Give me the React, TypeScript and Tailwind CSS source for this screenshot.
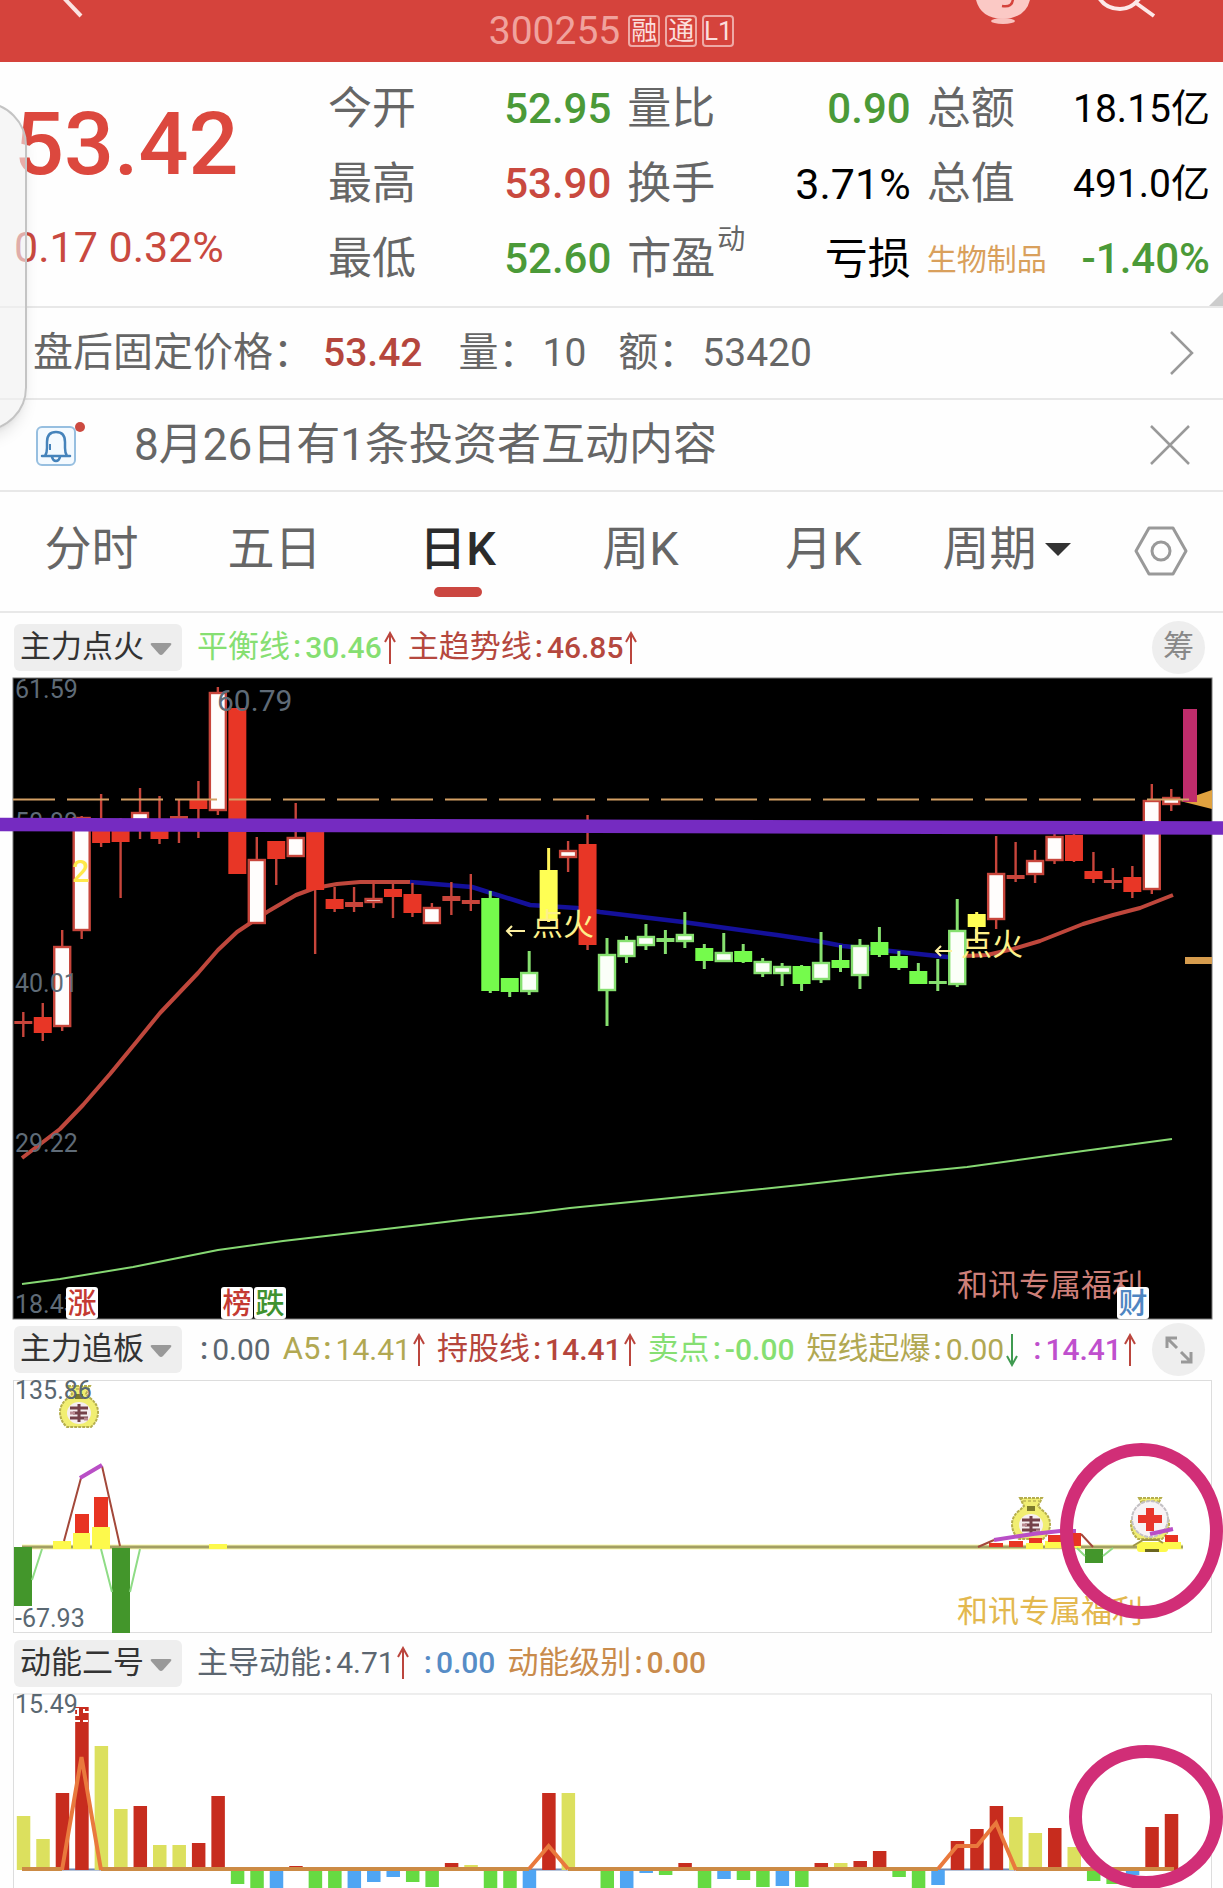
import { useState, type ReactNode } from "react";

const STEP = 19.457;
const FIRST = 23.3;
const cx = (i: number) => FIRST + i * STEP;

type Kind = "r" | "h" | "g" | "w" | "y";
type Candle = [high: number, top: number, bottom: number, low: number, kind: Kind];

const candles: Candle[] = [
  [1012, 1021, 1024, 1037, "r"], [1003, 1017, 1033, 1041, "r"], [930, 946, 1027, 1031, "h"],
  [816, 817, 931, 939, "h"], [794, 822, 843, 847, "r"], [818, 822, 842, 898, "r"],
  [788, 812, 826, 839, "h"], [796, 825, 839, 844, "r"], [800, 816, 820, 843, "r"],
  [781, 800, 809, 838, "r"], [687, 692, 811, 815, "h"], [708, 708, 874, 874, "r"],
  [837, 859, 924, 924, "h"], [841, 841, 859, 885, "r"], [803, 837, 857, 857, "h"],
  [830, 830, 890, 954, "r"], [887, 899, 909, 912, "r"], [887, 902, 907, 912, "r"],
  [880, 898, 903, 908, "h"], [883, 889, 897, 918, "r"], [883, 894, 913, 917, "r"],
  [903, 907, 924, 924, "h"], [882, 896, 901, 915, "r"], [874, 900, 904, 911, "r"],
  [891, 898, 991, 993, "g"], [978, 978, 992, 997, "g"], [951, 972, 992, 995, "w"],
  [848, 870, 920, 922, "y"], [841, 850, 858, 872, "h"], [815, 844, 945, 950, "r"],
  [938, 954, 991, 1026, "w"], [936, 940, 957, 963, "w"], [924, 936, 946, 950, "w"],
  [930, 938, 942, 954, "g"], [912, 934, 942, 948, "w"], [944, 948, 961, 969, "g"],
  [933, 952, 962, 962, "w"], [944, 951, 962, 963, "g"], [958, 961, 974, 977, "w"],
  [963, 966, 974, 986, "w"], [965, 966, 984, 991, "g"], [932, 962, 980, 983, "w"],
  [945, 960, 968, 972, "g"], [939, 945, 976, 989, "w"], [927, 942, 955, 957, "g"],
  [951, 956, 968, 970, "g"], [963, 971, 984, 984, "g"], [959, 981, 984, 991, "g"],
  [899, 930, 985, 987, "w"], [912, 914, 927, 943, "y"], [836, 873, 920, 929, "h"],
  [842, 875, 879, 882, "r"], [850, 860, 875, 883, "h"], [833, 836, 861, 864, "h"],
  [833, 835, 861, 862, "r"], [852, 871, 879, 883, "r"], [868, 880, 883, 889, "r"],
  [866, 877, 892, 898, "r"], [784, 800, 890, 894, "h"], [789, 797, 805, 811, "h"],
];

const edge: Record<Kind, string> = { r: "#c8453b", h: "#c8453b", g: "#86e06f", w: "#86e06f", y: "#fff35a" };
const fill: Record<Kind, string> = { r: "#e83626", h: "#fffdfc", g: "#75fb4c", w: "#fbfff8", y: "#ffff54" };

const energy: [number, string][] = [
  [1816, "Y"], [1839, "Y"], [1793, "R"], [1707, "R"], [1746, "Y"], [1809, "Y"], [1806, "R"], [1845, "Y"],
  [1845, "Y"], [1843, "R"], [1796, "R"], [1884, "G"], [1900, "G"], [1900, "B"], [1866, "R"], [1900, "G"],
  [1900, "G"], [1900, "B"], [1882, "B"], [1877, "B"], [1882, "G"], [1887, "G"], [1863, "R"], [1865, "Y"],
  [1900, "G"], [1900, "G"], [1900, "B"], [1793, "R"], [1793, "Y"], [1869, "Y"], [1900, "G"], [1900, "B"],
  [1873, "B"], [1875, "G"], [1863, "R"], [1900, "G"], [1879, "B"], [1880, "G"], [1887, "G"], [1886, "B"],
  [1887, "G"], [1863, "R"], [1863, "Y"], [1861, "R"], [1851, "R"], [1877, "G"], [1900, "G"], [1885, "B"],
  [1841, "R"], [1829, "R"], [1806, "R"], [1817, "Y"], [1833, "Y"], [1828, "R"], [1847, "Y"], [1881, "G"],
  [1884, "G"], [1875, "B"], [1827, "R"], [1814, "R"],
];
const energyFill: Record<string, string> = { Y: "#dce05e", R: "#c72c1e", G: "#66da42", B: "#4fa5f3" };

const periods = ["分时", "五日", "日K", "周K", "月K"];

function Stat({ label, sup, value, tone }: { label: ReactNode; sup?: string; value: string; tone: string }) {
  return (
    <div className="flex h-[75px] items-center justify-between whitespace-nowrap">
      <span className="relative text-[44px] text-[#666]">
        {label}
        {sup && <sup className="absolute -top-2 left-full ml-0.5 text-[28px] leading-8">{sup}</sup>}
      </span>
      <span className={tone}>{value}</span>
    </div>
  );
}

function Arrow({ down = false }: { down?: boolean }) {
  return (
    <svg viewBox="0 0 12 34" className="ml-0.5 h-[34px] w-3" fill="none" stroke={down ? "#3f9a50" : "#bb453d"} strokeWidth="2" aria-hidden="true">
      {down ? <path d="M6 1V32M1 23L6 32L11 23" /> : <path d="M6 33V2M1 11L6 2L11 11" />}
    </svg>
  );
}

function Reading({ label = "", value, tone, strong = false, arrow }: { label?: string; value: string; tone: string; strong?: boolean; arrow?: "up" | "down" }) {
  return (
    <div className={`flex items-center whitespace-nowrap text-[31px] ${tone}`}>
      <span>{label}</span>
      <span className="mr-1 ml-[3px] font-medium">:</span>
      <span className={strong ? "text-[30px] font-medium" : "text-[30px]"}>{value}</span>
      {arrow && <Arrow down={arrow === "down"} />}
    </div>
  );
}

function Picker({ name, label }: { name: string; label: string }) {
  return (
    <div className="relative mr-[3px] w-[168px] shrink-0">
      <select aria-label={label} className="block h-[47px] w-full appearance-none rounded-md bg-[#eee] pl-1.5 text-[31px] text-[#333]" defaultValue={name}>
        <option>{name}</option>
      </select>
      <svg viewBox="0 0 22 13" className="pointer-events-none absolute top-[19px] right-[10px] h-[13px] w-[22px]" aria-hidden="true">
        <path d="M2 0H20Q22 0 21 2L13 11Q11 13 9 11L1 2Q0 0 2 0Z" fill="#999" />
      </svg>
    </div>
  );
}

function Bag({ x, y, cross = false }: { x: number; y: number; cross?: boolean }) {
  return (
    <g transform={`translate(${x} ${y})`}>
      <path d="M-11 0L11 0L7 8L11 12Q19 18 19 26Q19 35 12 41H-12Q-19 35 -19 26Q-19 18 -11 12L-7 8Z" fill="#f1ee72" stroke="#b5ae4d" strokeWidth="2" strokeDasharray="3 1" />
      <path d="M-8 3H8" stroke="#cbc35c" strokeWidth="2" strokeDasharray="3 2" />
      {!cross && <rect x="-4" y="8" width="8" height="5" fill="#7d7a2a" />}
      {cross ? (
        <>
          <circle cx="0" cy="21" r="18" fill="#f7f3f5" stroke="#c3c0c4" strokeWidth="2" strokeDasharray="4 1" />
          <path d="M-4 10H4V17H12V25H4V33H-4V25H-12V17H-4Z" fill="#e8362b" />
        </>
      ) : (
        <>
          <ellipse cx="0" cy="27" rx="12" ry="11" fill="#f5eef0" />
          <path d="M-9 22H9M-6 27H8M-9 32H9M0 18V36" stroke="#75424a" strokeWidth="3" />
          <path d="M-9 27H-4M5 33H9" stroke="#b98a92" strokeWidth="3" />
        </>
      )}
    </g>
  );
}

function EventTag({ x, color, char }: { x: number; color: string; char: string }) {
  return (
    <g>
      <rect x={x} y="1287" width="32" height="32" rx="3" fill="#fff" />
      <text x={x + 16} y="1314" fontSize="29" textAnchor="middle" fill={color} fontWeight="500">{char}</text>
    </g>
  );
}

function TrendChart() {
  return (
    <svg viewBox="13 678 1199 641" className="block h-auto w-full overflow-visible" role="img" aria-label="日K 主力点火">
      <rect x="13" y="678" width="1199" height="641" fill="#000" stroke="#777" strokeWidth="1" />
      <g fill="none" strokeLinejoin="round">
        <path d="M22 1284L60 1279L133 1267L218 1250L283 1241L420 1225L470 1219L530 1213L570 1208L722 1193L800 1185L897 1174L967 1167L1083 1151L1172 1139" stroke="#86d873" strokeWidth="2" />
        <path d="M22 1158L60 1129L83 1105L110 1074L138 1040L160 1013L198 973L218 950L237 932L252 922L267 912L296 895L315 888L337 884L360 882L410 882" stroke="#bf473c" strokeWidth="4" />
        <path d="M410 882L472 887L488 892L530 905L577 908L600 912L683 922L777 935L817 941L843 946L900 952L947 957L963 956" stroke="#14109a" strokeWidth="4.5" />
        <path d="M963 956L987 955L1013 949L1040 941L1083 924L1113 915L1140 908L1173 895" stroke="#bf473c" strokeWidth="4" />
      </g>
      {candles.map(([high, top, bottom, low, kind], i) => {
        const hollow = kind === "h" || kind === "w";
        return (
          <g key={i}>
            <path d={`M${cx(i)} ${high}V${low}`} stroke={edge[kind]} strokeWidth={kind === "g" || kind === "w" || kind === "y" ? 3 : 2.4} />
            {hollow ? (
              <rect x={cx(i) - 8} y={top + 1} width="16" height={Math.max(bottom - top - 2, 3)} fill={fill[kind]} stroke={edge[kind]} strokeWidth="2.4" />
            ) : (
              <rect x={cx(i) - 9} y={top} width="18" height={bottom - top} fill={bottom - top < 6 ? edge[kind] : fill[kind]} />
            )}
          </g>
        );
      })}
      <path d="M1180 801L1212 790V809Z" fill="#e0a23f" />
      <rect x="1183" y="709" width="14" height="93" fill="#bf2c6b" />
      <rect x="1185" y="957" width="27" height="7" fill="#d69c4e" />
      <path d="M13 799.5H1190" stroke="#d3a065" strokeWidth="2" strokeDasharray="42 12" />
      <g fontSize="25" fill="#5f6b77">
        <text x="15" y="698">61.59</text>
        <text x="15" y="831">50.80</text>
        <text x="15" y="992">40.01</text>
        <text x="15" y="1152">29.22</text>
        <text x="15" y="1313">18.43</text>
        <text x="217" y="711" fontSize="30">60.79</text>
      </g>
      <text x="72" y="882" fontSize="31" fontWeight="500" fill="#ffe94a">2</text>
      <g fill="#fdf08a" fontSize="31">
        <text x="532" y="935">点火</text>
        <text x="961" y="955">点火</text>
      </g>
      <path d="M525 931H507M512 926L507 931L512 936M952 951H936M941 946L936 951L941 956" fill="none" stroke="#fdf0a0" strokeWidth="2" />
      <text x="957" y="1296" fontSize="31" fill="#cd7f79">和讯专属福利</text>
      <EventTag x={66} color="#c43a32" char="涨" />
      <EventTag x={221} color="#c43a32" char="榜" />
      <EventTag x={254} color="#3f9230" char="跌" />
      <EventTag x={1117} color="#4f86c2" char="财" />
      <path d="M0 824.5L1223 828" stroke="#752bc1" strokeWidth="13.5" />
    </svg>
  );
}

function ChaseChart() {
  return (
    <svg viewBox="13 1380 1199 253" className="block h-auto w-full overflow-visible" role="img" aria-label="主力追板">
      <rect x="13.5" y="1380.5" width="1198" height="252" fill="#fff" stroke="#ddd" />
      <Bag x={79} y={1386} />
      <Bag x={1031} y={1498} />
      <Bag x={1150} y={1498} cross />
      <path d="M22 1547H1183" stroke="#fbfab0" strokeWidth="5" />
      <path d="M22 1547H1183" stroke="#a39f63" strokeWidth="3" />
      <g fill="#43962b">
        <rect x="14" y="1547" width="18" height="59" />
        <rect x="112" y="1548" width="18" height="85" />
        <rect x="1085" y="1549" width="18" height="14" />
      </g>
      <g fill="#fdf94c">
        <rect x="53" y="1541" width="18" height="8" />
        <rect x="73" y="1533" width="17" height="16" />
        <rect x="92" y="1527" width="18" height="22" />
        <rect x="209" y="1544" width="18" height="5" />
        <rect x="1026" y="1543" width="17" height="6" />
        <rect x="1045" y="1541" width="36" height="7" />
        <rect x="1137" y="1542" width="31" height="10" rx="3" />
        <rect x="1160" y="1542" width="21" height="7" />
      </g>
      <g fill="#e83422">
        <rect x="75" y="1514" width="14" height="19" />
        <rect x="94" y="1497" width="14" height="30" />
        <rect x="989" y="1543" width="14" height="4" />
        <rect x="1009" y="1541" width="14" height="6" />
        <rect x="1029" y="1538" width="13" height="5" />
        <rect x="1048" y="1535" width="14" height="7" />
        <rect x="1067" y="1533" width="14" height="13" />
        <rect x="1165" y="1535" width="13" height="7" />
      </g>
      <g fill="none" strokeWidth="2">
        <path d="M32 1580L42 1549M101 1549L112 1592M130 1592L140 1549M1077 1548L1085 1556M1103 1556L1113 1548" stroke="#8fdc86" />
        <path d="M64 1541L81 1478M102 1466L120 1546M978 1547L994 1540M1081 1534L1093 1547" stroke="#a3483a" />
        <path d="M1133 1546L1143 1540H1158L1163 1543" stroke="#a09545" />
        <path d="M80 1478L102 1465M994 1540L1033 1534L1060 1531H1076M1150 1534L1173 1529" stroke="#b94fc6" strokeWidth="4" />
      </g>
      <rect x="1145" y="1549" width="14" height="3" fill="#6b651f" />
      <text x="15" y="1399" fontSize="25" fill="#5a6872">135.86</text>
      <text x="15" y="1627" fontSize="25" fill="#5a6872">-67.93</text>
      <text x="957" y="1622" fontSize="31" fill="#e3b84e">和讯专属福利</text>
      <ellipse cx="1141.5" cy="1531" rx="75" ry="81.5" fill="none" stroke="#d12e77" strokeWidth="13" />
    </svg>
  );
}

function EnergyChart() {
  return (
    <svg viewBox="13 1693 1199 195" className="block h-auto w-full overflow-visible" role="img" aria-label="动能二号">
      <path d="M13.5 1900V1694H1211.5V1900" fill="#fff" stroke="#ddd" />
      <path d="M22 1869.5H1173" stroke="#6f88b4" strokeWidth="2" />
      {energy.map(([value, tone], i) => (
        <rect key={i} x={cx(i) - 6.5} y={Math.min(value, 1870)} width="13.5" height={Math.abs(1870 - value)} fill={energyFill[tone]} />
      ))}
      <g fill="none" stroke="#cc8b45" strokeWidth="4">
        <path d="M22 1869H62M101 1869H529M568 1869H938M1016 1869H1174" />
        <path d="M62 1870L81.5 1757L101 1870M529 1869L548.6 1846L568 1869M938 1869L957 1846H977L996 1823L1016 1870" stroke="#e9793d" />
      </g>
      <path d="M75 1709h3v6h-3M75 1721h5M83 1721h5M84 1709v3h5" stroke="#fff" strokeWidth="2" fill="none" />
      <text x="15" y="1713" fontSize="25" fill="#5a6872">15.49</text>
      <ellipse cx="1146" cy="1817" rx="70.5" ry="65.5" fill="none" stroke="#d12e77" strokeWidth="13" />
    </svg>
  );
}

const green = "text-[42px] font-medium text-[#4b9a38]";
const red = "text-[42px] font-medium text-[#c9493f]";

export default function App() {
  const [period, setPeriod] = useState("日K");
  return (
    <main className="relative h-fit max-h-screen overflow-hidden bg-[#fefefe] font-[Roboto,'Noto_Sans_CJK_SC',sans-serif] leading-tight">
      <header className="relative flex h-[62px] items-center justify-center bg-[#d5433c]">
        <button aria-label="返回" className="absolute top-0 left-[58px]">
          <svg viewBox="0 0 30 20" className="h-5 w-[30px]" fill="none" stroke="#fbe3e1" strokeWidth="4"><path d="M4 -4L23 16" /></svg>
        </button>
        <h1 className="text-[39px] text-[#f0a29d]">300255</h1>
        <div className="ml-2 flex gap-[5px] text-[#fbdedc]">
          {["融", "通", "L1"].map((t) => (
            <span key={t} className="flex size-8 items-center justify-center rounded-[4px] border-2 border-[#eea9a5] text-[26px] leading-none">{t}</span>
          ))}
        </div>
        <button aria-label="助手" className="absolute top-0 right-[190px]">
          <svg viewBox="0 0 60 26" className="h-[26px] w-[60px]">
            <path d="M2 -8H58Q57 18 30 19Q3 18 2 -8Z" fill="#fbc9c5" />
            <path d="M29 6Q40 8 40 -2" fill="none" stroke="#d5433c" strokeWidth="2.5" />
            <ellipse cx="30" cy="21" rx="12" ry="3" fill="#f9c2be" />
          </svg>
        </button>
        <button aria-label="搜索" className="absolute top-0 right-[64px]">
          <svg viewBox="0 0 64 20" className="h-5 w-16" fill="none" stroke="#fde9e8" strokeWidth="4">
            <path d="M3 -4Q10 9 25 9Q38 9 46 -4M41 3L59 16" />
          </svg>
        </button>
      </header>

      <section className="relative flex border-b-2 border-[#e8e8e8] pt-2.5 pr-[13px] pb-[9px]">
        <div className="w-[328px] shrink-0 pl-[14px] font-medium text-[#dc483e]">
          <div className="mt-5 text-[88px] leading-[104px]">53.42</div>
          <div className="mt-6 text-[43px] leading-[54px] font-normal whitespace-nowrap text-[#c9493f]">0.17 0.32%</div>
        </div>
        <div className="grid grow grid-cols-3 gap-x-4">
          <Stat label="今开" value="52.95" tone={green} />
          <Stat label="量比" value="0.90" tone={green} />
          <Stat label="总额" value="18.15亿" tone="text-[39px] text-black" />
          <Stat label="最高" value="53.90" tone={red} />
          <Stat label="换手" value="3.71%" tone="text-[43px] text-black" />
          <Stat label="总值" value="491.0亿" tone="text-[39px] text-black" />
          <Stat label="最低" value="52.60" tone={green} />
          <Stat label="市盈" sup="动" value="亏损" tone="text-[43px] text-black" />
          <Stat label={<a href="#sector" className="block text-[30px] text-[#d9a05c]">生物制品</a>} value="-1.40%" tone={green} />
        </div>
        <svg viewBox="0 0 14 14" className="absolute right-0 bottom-0 size-3.5" aria-hidden="true"><path d="M14 0V14H0Z" fill="#ccc" /></svg>
      </section>

      <section className="flex h-[92px] items-center border-b-2 border-[#e8e8e8] pr-7 pl-[33px] text-[40px] whitespace-nowrap text-[#666]">
        <span>盘后固定价格：</span>
        <span className="ml-2.5 text-[39px] font-medium text-[#b5463d]">53.42</span>
        <span className="ml-9">量：</span>
        <span className="ml-1 text-[39px]">10</span>
        <span className="ml-8">额：</span>
        <span className="ml-1 text-[39px]">53420</span>
        <button aria-label="查看盘后交易" className="ml-auto">
          <svg viewBox="0 0 26 46" className="h-[46px] w-[26px]" fill="none" stroke="#999" strokeWidth="2.5"><path d="M2 2L23 23L2 44" /></svg>
        </button>
      </section>

      <section className="flex h-[92px] items-center border-b-2 border-[#e8e8e8] pr-8 pl-9 text-[44px] whitespace-nowrap text-[#666]">
        <svg viewBox="0 0 50 46" className="mr-12 h-[46px] w-[50px] shrink-0" fill="none" aria-hidden="true">
          <rect x="1" y="5" width="38" height="38" rx="5" fill="#f4faff" stroke="#97bfe0" strokeWidth="2" />
          <path d="M6 34H34M9 34Q11 31 11 26V20Q11 10 20 10Q29 10 29 20V26Q29 31 31 34M16 35Q17 39 20 39Q23 39 24 35" stroke="#4583bb" strokeWidth="2.5" strokeLinecap="round" />
          <path d="M14 28V22" stroke="#4583bb" strokeWidth="2" />
          <circle cx="44" cy="5" r="5" fill="#cc4a40" />
        </svg>
        <a href="#notice">8月26日有1条投资者互动内容</a>
        <button aria-label="关闭" className="ml-auto">
          <svg viewBox="0 0 42 42" className="size-[42px]" fill="none" stroke="#999" strokeWidth="2.5"><path d="M2 2L40 40M40 2L2 40" /></svg>
        </button>
      </section>

      <nav className="flex h-[121px] border-b-2 border-[#e8e8e8] text-[47px] text-[#666]">
        {periods.map((p) => (
          <button key={p} onClick={() => setPeriod(p)} className={`relative flex-[183] pb-1 ${p === period ? "font-medium text-[#2b2b2b]" : ""}`}>
            {p}
            {p === period && <span className="absolute bottom-3.5 left-1/2 h-2.5 w-12 -translate-x-1/2 rounded-full bg-[#cb4741]" />}
          </button>
        ))}
        <button aria-haspopup="menu" className="flex flex-[183] items-center justify-center gap-2 pb-1">
          周期
          <svg viewBox="0 0 26 13" className="h-[13px] w-[26px]" aria-hidden="true"><path d="M0 0H26L13 13Z" fill="#333" /></svg>
        </button>
        <button aria-label="设置" className="flex flex-[125] items-center justify-center pb-0.5">
          <svg viewBox="0 0 54 50" className="h-[50px] w-[54px]" fill="none" stroke="#999" strokeWidth="3" strokeLinejoin="round">
            <path d="M15 2H39L52 25L39 48H15L2 25Z" /><circle cx="27" cy="25" r="9" />
          </svg>
        </button>
      </nav>

      <div className="flex h-[65px] items-center gap-3 pt-1 pr-[18px] pl-[14px]">
        <Picker name="主力点火" label="主图指标" />
        <Reading label="平衡线" value="30.46" tone="text-[#86df72]" strong arrow="up" />
        <Reading label="主趋势线" value="46.85" tone="text-[#b5483e]" strong arrow="up" />
        <button className="ml-auto size-[53px] rounded-full bg-[#eee] text-[31px] text-[#888]">筹</button>
      </div>
      <div className="pr-[11px] pl-[13px]"><TrendChart /></div>

      <div className="flex h-[61px] items-center gap-3 pr-[18px] pl-[14px]">
        <Picker name="主力追板" label="副图指标一" />
        <Reading value="0.00" tone="text-[#5c6670]" />
        <Reading label="A5" value="14.41" tone="text-[#b1a852]" arrow="up" />
        <Reading label="持股线" value="14.41" tone="text-[#b5453b]" strong arrow="up" />
        <Reading label="卖点" value="-0.00" tone="text-[#86df72]" strong />
        <Reading label="短线起爆" value="0.00" tone="text-[#b1a852]" arrow="down" />
        <Reading value="14.41" tone="text-[#bf4fcd]" strong arrow="up" />
        <button aria-label="放大" className="ml-auto flex size-[53px] shrink-0 items-center justify-center rounded-full bg-[#eee]">
          <svg viewBox="0 0 28 28" className="size-7" fill="none" stroke="#999" strokeWidth="3"><path d="M2 12V2H12M2 2L12 12M26 16V26H16M26 26L16 16" /></svg>
        </button>
      </div>
      <div className="pr-[11px] pl-[13px]"><ChaseChart /></div>

      <div className="flex h-[60px] items-center gap-3 pr-[18px] pl-[14px]">
        <Picker name="动能二号" label="副图指标二" />
        <Reading label="主导动能" value="4.71" tone="text-[#5c6670]" arrow="up" />
        <Reading value="0.00" tone="text-[#568cc6]" strong />
        <Reading label="动能级别" value="0.00" tone="text-[#c98b4c]" strong />
      </div>
      <div className="pr-[11px] pl-[13px]"><EnergyChart /></div>

      <aside className="absolute top-[102px] -left-[60px] h-[329px] w-[87px] rounded-[60px] border-2 border-[#c4c4c4] bg-[#f0f0f0]/60 shadow-lg" aria-label="侧边栏" />
    </main>
  );
}
